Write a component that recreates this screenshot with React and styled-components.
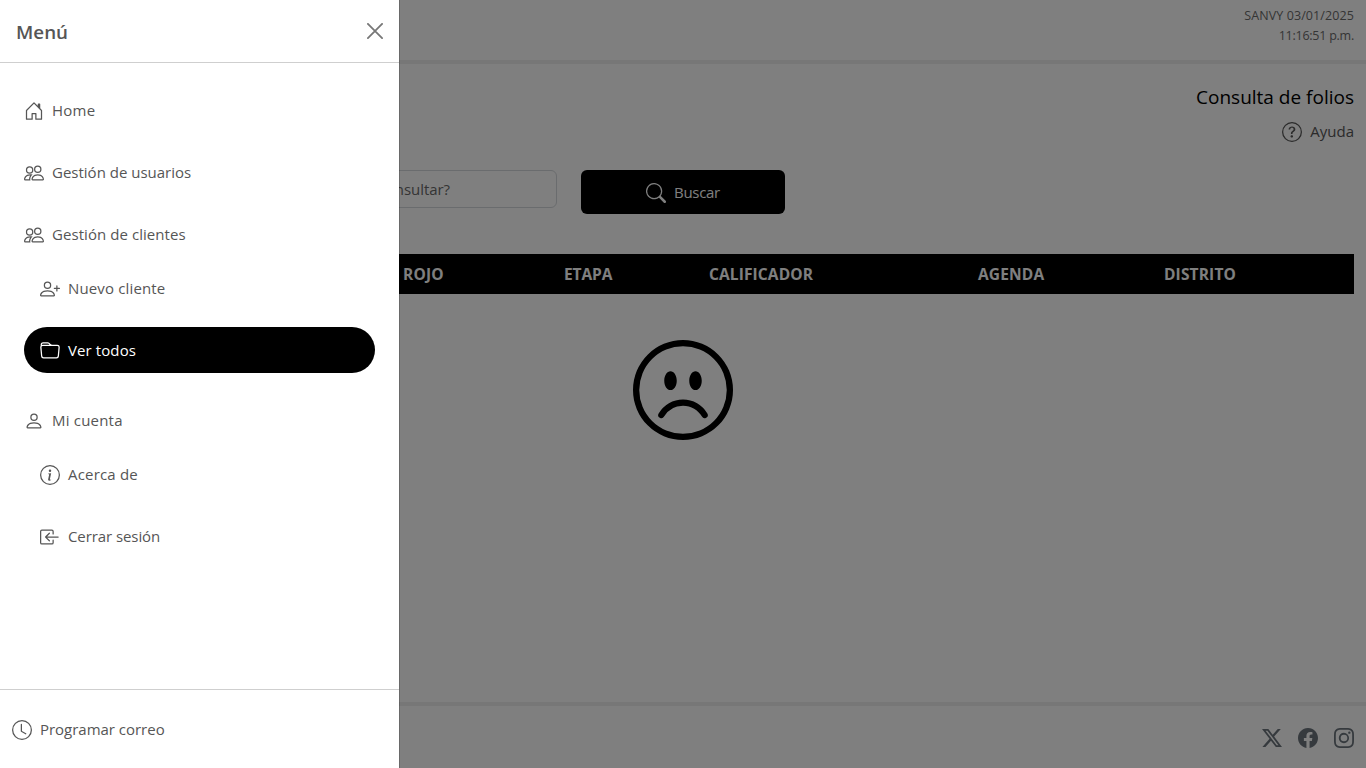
import React from "react";
import styled, { createGlobalStyle } from "styled-components";
import {
  BsPeople,
  BsPersonPlus,
  BsFolder,
  BsPerson,
  BsInfoCircle,
  BsBoxArrowInLeft,
  BsClock,
  BsQuestionCircle,
  BsSearch,
  BsTwitterX,
  BsFacebook,
  BsInstagram,
} from "react-icons/bs";

const GlobalStyle = createGlobalStyle`
  *, *::before, *::after { box-sizing: border-box; }
  body {
    margin: 0;
    background: #fff;
    color: #000;
    font-family: "Segoe UI", "Open Sans", "Noto Sans", sans-serif;
    font-size: 15px;
    line-height: 24px;
    overflow: hidden;
  }
  svg { display: block; flex: none; }
`;

const Page = styled.div`
  height: 100vh;
  display: flex;
  flex-direction: column;
`;

const TopBar = styled.header`
  height: 64px;
  padding: 6px 12px 0;
  border-bottom: 4px solid #efefef;
  text-align: right;
  font-size: 12.5px;
  line-height: 20px;
  color: #6b6b6b;
`;

const Stamp = styled.div`
  letter-spacing: ${(p) => p.$spacing || "0"};
`;

const Main = styled.main`
  flex: 1;
  padding: 18px 12px 0;
`;

const Title = styled.h1`
  margin: 0;
  text-align: right;
  font-size: 19px;
  font-weight: 400;
  line-height: 30px;
`;

const Help = styled.a`
  display: flex;
  justify-content: flex-end;
  align-items: center;
  gap: 8px;
  height: 24px;
  margin-top: 8px;
  color: #565656;
`;

const SearchRow = styled.div`
  display: flex;
  align-items: flex-start;
  gap: 24px;
  margin: 26px 0 40px 228px;
`;

const Input = styled.div`
  width: 317px;
  height: 38px;
  padding: 6px 12px;
  border: 1px solid #d4d8dc;
  border-radius: 6px;
  color: #6a6a6a;
  letter-spacing: -0.06px;
`;

const SearchButton = styled.button`
  display: flex;
  justify-content: center;
  align-items: center;
  gap: 8px;
  width: 204px;
  height: 44px;
  padding: 1px 0 0;
  border: 0;
  border-radius: 6px;
  background: #000;
  color: #fff;
  font: inherit;
`;

const TableHead = styled.div`
  display: grid;
  grid-template-columns: 391px 161px 145px 269px 186px 1fr;
  align-items: center;
  height: 40px;
  background: #000;
  color: #fff;
  font-size: 15.5px;
  font-weight: 700;
`;

const HeadCell = styled.span`
  letter-spacing: ${(p) => p.$spacing || "0"};
`;

const Empty = styled.div`
  display: flex;
  justify-content: center;
  padding-top: 46px;
`;

const Footer = styled.footer`
  display: flex;
  justify-content: flex-end;
  align-items: flex-start;
  gap: 16px;
  height: 66px;
  padding: 22px 12px 0;
  border-top: 4px solid #efefef;
  color: #6c757d;
`;

const Backdrop = styled.div`
  position: fixed;
  inset: 0;
  background: rgba(0, 0, 0, 0.5);
`;

const Drawer = styled.aside`
  position: fixed;
  inset: 0 auto 0 0;
  display: flex;
  flex-direction: column;
  width: 400px;
  background: #fff;
  background-clip: padding-box;
  border-right: 1px solid rgba(0, 0, 0, 0.175);
  color: #565656;
`;

const DrawerHeader = styled.div`
  display: flex;
  justify-content: space-between;
  align-items: center;
  height: 63px;
  padding: 0 16px;
  border-bottom: 1px solid #cfcfcf;
`;

const DrawerTitle = styled.h5`
  margin: 0;
  padding-top: 2px;
  font-size: 18.8px;
  font-weight: 600;
  line-height: 30px;
`;

const Nav = styled.nav`
  flex: 1;
  display: flex;
  flex-direction: column;
  gap: 16px;
  padding: 24px;
`;

const Group = styled.div`
  display: flex;
  flex-direction: column;
  gap: 8px;
`;

const SubList = styled.div`
  display: flex;
  flex-direction: column;
  gap: 16px;
  padding-bottom: 8px;
`;

const Item = styled.a`
  display: flex;
  align-items: center;
  gap: 8px;
  height: 46px;
  padding: 2px ${(p) => (p.$sub ? "16px" : "0")} 0;
  border-radius: 23px;
  background: ${(p) => (p.$active ? "#000" : "transparent")};
  color: ${(p) => (p.$active ? "#fff" : "inherit")};
`;

const Label = styled.span`
  padding-bottom: 2px;
  letter-spacing: ${(p) => p.$spacing || "0"};
`;

const DrawerFooter = styled.div`
  display: flex;
  align-items: center;
  gap: 8px;
  height: 79px;
  padding: 2px 12px 0;
  border-top: 1px solid #cfcfcf;
`;

const HouseIcon = () => (
  <svg width="20" height="20" viewBox="0 0 16 16" fill="currentColor">
    <path d="M8.354 1.146a.5.5 0 0 0-.708 0l-6 6A.5.5 0 0 0 1.5 7.5v7a.5.5 0 0 0 .5.5h4.5a.5.5 0 0 0 .5-.5v-4h2v4a.5.5 0 0 0 .5.5H14a.5.5 0 0 0 .5-.5v-7a.5.5 0 0 0-.146-.354L13 5.793V2.5a.5.5 0 0 0-.5-.5h-1a.5.5 0 0 0-.5.5v1.293zM2.5 14V7.707l5.5-5.5 5.5 5.5V14H10v-4a.5.5 0 0 0-.5-.5h-3a.5.5 0 0 0-.5.5v4z" />
  </svg>
);

const CloseIcon = () => (
  <svg width="16" height="16" viewBox="0 0 16 16" stroke="#777" strokeWidth="1.8" strokeLinecap="round">
    <path d="M.9.9l14.2 14.2M15.1.9L.9 15.1" />
  </svg>
);

const FrownIcon = () => (
  <svg width="100" height="100" viewBox="0 0 16 16" fill="currentColor">
    <path d="M8 15A7 7 0 1 1 8 1a7 7 0 0 1 0 14m0 1A8 8 0 1 0 8 0a8 8 0 0 0 0 16" />
    <path d="M4.285 12.433a.5.5 0 0 0 .683-.183A3.5 3.5 0 0 1 8 10.5c1.295 0 2.426.703 3.032 1.75a.5.5 0 0 0 .866-.5A4.5 4.5 0 0 0 8 9.5a4.5 4.5 0 0 0-3.898 2.25.5.5 0 0 0 .183.683M7 6.5C7 7.328 6.552 8 6 8s-1-.672-1-1.5S5.448 5 6 5s1 .672 1 1.5m4 0c0 .828-.448 1.5-1 1.5s-1-.672-1-1.5S9.448 5 10 5s1 .672 1 1.5" />
  </svg>
);

export default function App() {
  return (
    <>
      <GlobalStyle />
      <Page>
        <TopBar>
          <Stamp $spacing="0.1px">SANVY 03/01/2025</Stamp>
          <Stamp $spacing="-0.24px">11:16:51 p.m.</Stamp>
        </TopBar>
        <Main>
          <Title>Consulta de folios</Title>
          <Help>
            <BsQuestionCircle size={20} />
            <Label>Ayuda</Label>
          </Help>
          <SearchRow>
            <Input>¿Qué folio deseas consultar?</Input>
            <SearchButton>
              <BsSearch size={20} />
              <Label $spacing="-0.3px">Buscar</Label>
            </SearchButton>
          </SearchRow>
          <TableHead>
            <span />
            <HeadCell $spacing="0.2px">ROJO</HeadCell>
            <HeadCell $spacing="-0.1px">ETAPA</HeadCell>
            <HeadCell $spacing="0.12px">CALIFICADOR</HeadCell>
            <HeadCell $spacing="0.15px">AGENDA</HeadCell>
            <HeadCell $spacing="0.15px">DISTRITO</HeadCell>
          </TableHead>
          <Empty>
            <FrownIcon />
          </Empty>
        </Main>
        <Footer>
          <BsTwitterX size={20} />
          <BsFacebook size={20} />
          <BsInstagram size={20} />
        </Footer>
      </Page>
      <Backdrop />
      <Drawer>
        <DrawerHeader>
          <DrawerTitle>Menú</DrawerTitle>
          <CloseIcon />
        </DrawerHeader>
        <Nav>
          <Item>
            <HouseIcon />
            <Label $spacing="0.25px">Home</Label>
          </Item>
          <Item>
            <BsPeople size={20} />
            <Label>Gestión de usuarios</Label>
          </Item>
          <Group>
            <Item>
              <BsPeople size={20} />
              <Label $spacing="0.06px">Gestión de clientes</Label>
            </Item>
            <SubList>
              <Item $sub>
                <BsPersonPlus size={20} />
                <Label $spacing="0.15px">Nuevo cliente</Label>
              </Item>
              <Item $sub $active>
                <BsFolder size={20} />
                <Label $spacing="0.1px">Ver todos</Label>
              </Item>
            </SubList>
          </Group>
          <Group>
            <Item>
              <BsPerson size={20} />
              <Label $spacing="0.2px">Mi cuenta</Label>
            </Item>
            <SubList>
              <Item $sub>
                <BsInfoCircle size={20} />
                <Label $spacing="0.18px">Acerca de</Label>
              </Item>
              <Item $sub>
                <BsBoxArrowInLeft size={20} />
                <Label $spacing="-0.08px">Cerrar sesión</Label>
              </Item>
            </SubList>
          </Group>
        </Nav>
        <DrawerFooter>
          <BsClock size={20} />
          <Label $spacing="-0.02px">Programar correo</Label>
        </DrawerFooter>
      </Drawer>
    </>
  );
}
